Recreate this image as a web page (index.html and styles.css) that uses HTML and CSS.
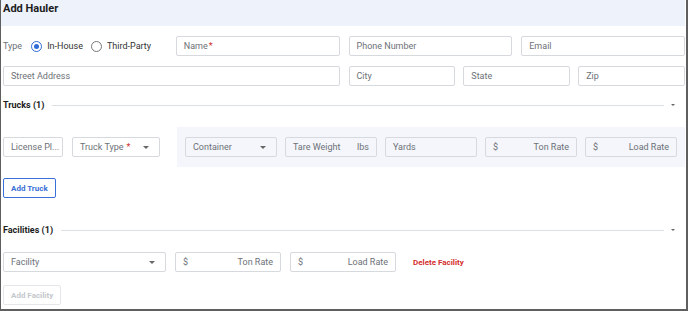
FILE: index.html
```html
<!DOCTYPE html>
<html lang="en">
<head>
    <meta charset="UTF-8">
    <meta name="viewport" content="width=device-width, initial-scale=1.0">
    <title>Add Hauler</title>
    <link rel="stylesheet" href="styles.css">
</head>
<body>

    <div class="modal">
        <!-- Header -->
        <div class="modal-header">Add Hauler</div>

        <div class="modal-body">
            <!-- Hauler details -->
            <div class="row-main">
                <div class="type-group">
                    <span class="type-label">Type</span>
                    <label class="radio"><span class="radio-dot checked"></span>In-House</label>
                    <label class="radio"><span class="radio-dot"></span>Third-Party</label>
                </div>
                <div class="field">Name<span class="req">*</span></div>
                <div class="field">Phone Number</div>
                <div class="field">Email</div>
            </div>

            <div class="row-address">
                <div class="field">Street Address</div>
                <div class="address-split">
                    <div class="field">City</div>
                    <div class="field">State</div>
                    <div class="field">Zip</div>
                </div>
            </div>

            <!-- Trucks -->
            <div class="section-head">
                <span class="section-title">Trucks (1)</span>
                <span class="section-line"></span>
                <span class="caret small"></span>
            </div>

            <div class="truck-row">
                <div class="field plate">License Pl...</div>
                <div class="field select truck-type">Truck Type<span class="req spaced">*</span><span class="caret"></span></div>
                <div class="truck-panel">
                    <div class="field select">Container<span class="caret"></span></div>
                    <div class="field split"><span>Tare Weight</span><span>lbs</span></div>
                    <div class="field">Yards</div>
                    <div class="field split"><span>$</span><span>Ton Rate</span></div>
                    <div class="field split"><span>$</span><span>Load Rate</span></div>
                </div>
            </div>

            <button class="btn btn-blue">Add Truck</button>

            <!-- Facilities -->
            <div class="section-head facilities-head">
                <span class="section-title">Facilities (1)</span>
                <span class="section-line"></span>
                <span class="caret small"></span>
            </div>

            <div class="facility-row">
                <div class="field select">Facility<span class="caret"></span></div>
                <div class="field split"><span>$</span><span>Ton Rate</span></div>
                <div class="field split"><span>$</span><span>Load Rate</span></div>
                <span class="delete-link">Delete Facility</span>
            </div>

            <button class="btn btn-disabled">Add Facility</button>
        </div>
    </div>

</body>
</html>
```

FILE: styles.css
```css
body {
    margin: 0;
    padding: 0;
    font-family: Roboto, "Liberation Sans", sans-serif;
    background-color: #fff;
    color: #222;
}
.modal {
    width: 688px;
    height: 311px;
    box-sizing: border-box;
    border-left: 1px solid #5f5f5f;
    border-right: 2px solid #5f5f5f;
    border-bottom: 2px solid #5f5f5f;
    overflow: hidden;
}
.modal-header {
    height: 26px;
    box-sizing: border-box;
    padding: 2px 0 0 2px;
    background-color: #eef2fb;
    font-size: 11px;
    font-weight: bold;
    line-height: 14px;
    color: #1c1c1c;
    margin-right: 1px;
}
.modal-body {
    padding: 10px 1px 0 2px;
}
.field {
    height: 20px;
    box-sizing: border-box;
    border: 1px solid #d6d9de;
    border-radius: 2px;
    padding: 0 7px;
    font-size: 9px;
    color: #6d7177;
    display: flex;
    align-items: center;
    background-color: #fff;
    white-space: nowrap;
    overflow: hidden;
}
.req {
    color: #d32f2f;
    margin-left: 1px;
}
.req.spaced {
    margin-left: 3px;
}
.row-main {
    display: grid;
    grid-template-columns: 1fr 1fr 1fr 1fr;
    gap: 9px;
}
.type-group {
    display: flex;
    align-items: center;
    font-size: 9px;
}
.type-label {
    color: #6d7177;
    margin-right: 9px;
}
.radio {
    display: flex;
    align-items: center;
    color: #333;
    margin-right: 8px;
}
.radio-dot {
    width: 9px;
    height: 9px;
    border: 1px solid #777;
    border-radius: 50%;
    margin-right: 5px;
    position: relative;
}
.radio-dot.checked {
    border-color: #2f6bd8;
}
.radio-dot.checked::after {
    content: "";
    position: absolute;
    left: 2px;
    top: 2px;
    width: 5px;
    height: 5px;
    border-radius: 50%;
    background-color: #2f6bd8;
}
.row-address {
    display: grid;
    grid-template-columns: 1fr 1fr;
    gap: 9px;
    margin-top: 10px;
}
.address-split {
    display: grid;
    grid-template-columns: 1fr 1fr 1fr;
    gap: 8px;
}
.section-head {
    display: flex;
    align-items: center;
    height: 16px;
    margin-top: 11px;
}
.section-title {
    font-size: 9px;
    font-weight: bold;
    color: #1c1c1c;
    margin-right: 8px;
}
.section-line {
    flex: 1;
    height: 1px;
    background-color: #dcdfe3;
    margin-right: 7px;
}
.caret {
    width: 0;
    height: 0;
    border-left: 3px solid transparent;
    border-right: 3px solid transparent;
    border-top: 3px solid #666;
    margin-left: auto;
}
.caret.small {
    margin: 0 10px 0 0;
    border-left-width: 2px;
    border-right-width: 2px;
    border-top-width: 2px;
}
.truck-row {
    display: flex;
    align-items: center;
    margin-top: 14px;
}
.plate {
    width: 60px;
    margin-right: 9px;
}
.truck-type {
    width: 88px;
    margin-right: 17px;
}
.truck-type .caret {
    margin-right: 2px;
}
.select .caret {
    margin-right: 3px;
}
.truck-panel {
    flex: 1;
    display: grid;
    grid-template-columns: repeat(5, 1fr);
    gap: 8px;
    padding: 10px 8px;
    background-color: #f4f6fb;
}
.truck-panel .field {
    background-color: #f4f6fb;
}
.split {
    justify-content: space-between;
}
.btn {
    display: block;
    height: 20px;
    margin-top: 11px;
    padding: 0 7px;
    border-radius: 2px;
    font-family: Roboto, "Liberation Sans", sans-serif;
    font-size: 8px;
    font-weight: bold;
    background-color: #fff;
}
.btn-blue {
    border: 1px solid #3a6fd6;
    color: #3a6fd6;
}
.btn-disabled {
    border: 1px solid #e4e6ea;
    color: #c4c7cc;
    margin-top: 13px;
}
.facilities-head {
    margin-top: 24px;
}
.facility-row {
    display: grid;
    grid-template-columns: 163px 106px 106px auto;
    gap: 9px;
    align-items: center;
    margin-top: 14px;
}
.delete-link {
    font-size: 8px;
    font-weight: bold;
    color: #d32f2f;
    margin-left: 8px;
}
```
